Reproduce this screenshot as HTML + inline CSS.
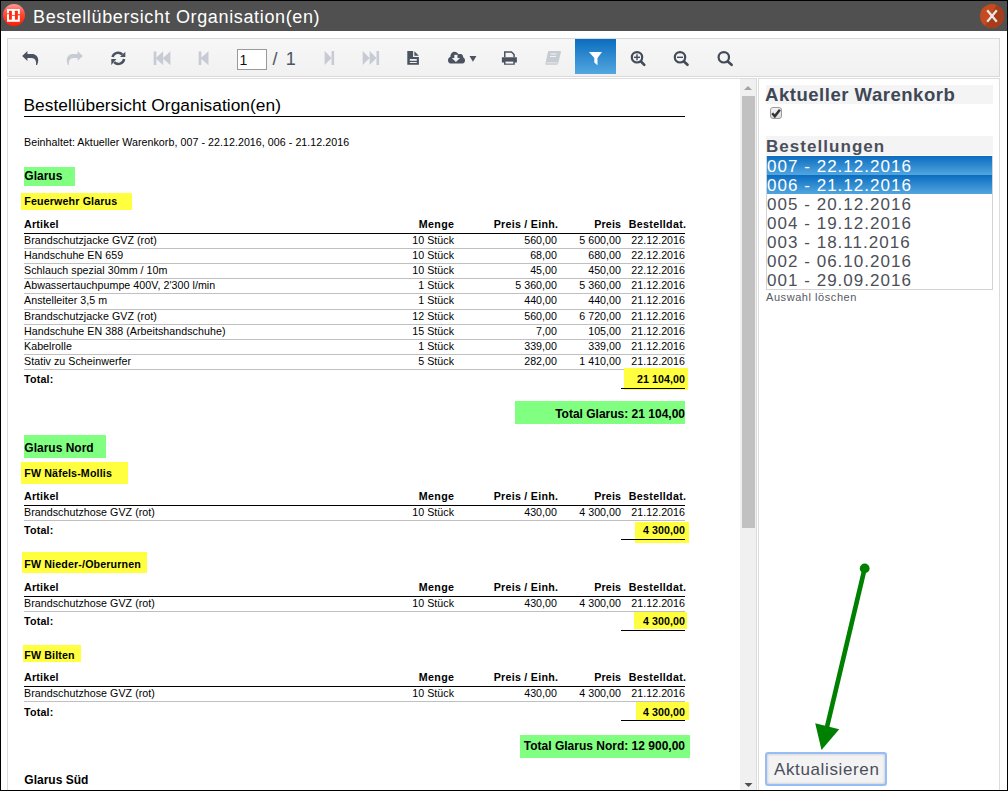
<!DOCTYPE html>
<html><head><meta charset="utf-8">
<style>
html,body{margin:0;padding:0;}
body{width:1008px;height:791px;overflow:hidden;position:relative;background:#fff;font-family:"Liberation Sans",sans-serif;}
.t{position:absolute;white-space:nowrap;line-height:30px;}
.r{position:absolute;}
.a{position:absolute;}
</style></head><body>
<!-- outer frame -->
<div class="a" style="left:0;top:0;width:1008px;height:791px;box-sizing:border-box;border:1px solid #000;border-bottom:none;"></div>
<div class="a" style="left:0;top:790px;width:1008px;height:1px;background:#000;"></div>
<!-- title bar -->
<div class="a" style="left:1px;top:1px;width:1006px;height:30px;background:#505050;"></div>
<svg class="a" style="left:2px;top:3px" width="24" height="24" viewBox="0 0 24 24">
 <defs><linearGradient id="lg" x1="0" y1="0" x2="0" y2="1"><stop offset="0" stop-color="#ff9a92"/><stop offset="0.45" stop-color="#ff4a38"/><stop offset="1" stop-color="#ff1a00"/></linearGradient></defs>
 <circle cx="12" cy="12" r="11" fill="url(#lg)"/>
 <rect x="5" y="6" width="12.8" height="12.8" fill="#fff"/>
 <rect x="7" y="7.7" width="2.9" height="9" rx="0.6" fill="#ff2a10"/>
 <rect x="12.9" y="7.7" width="3" height="9" rx="0.6" fill="#ff2a10"/>
 <rect x="5" y="10.2" width="2.2" height="1" fill="#ff4a30"/>
 <rect x="9.8" y="12" width="3.2" height="0.9" fill="#ff4a30"/>
 <rect x="15.8" y="11" width="2.1" height="1.4" fill="#ff4a30"/>
</svg>
<div class="t" style="left:33px;top:2px;font-size:18px;letter-spacing:0.64px;color:#fff;line-height:30px;">Bestellübersicht Organisation(en)</div>
<svg class="a" style="left:980px;top:4px" width="24" height="24" viewBox="0 0 24 24">
 <defs><clipPath id="cc"><circle cx="12" cy="12" r="12"/></clipPath></defs>
 <g clip-path="url(#cc)"><rect width="24" height="24" fill="#c44a20"/><polygon points="17,0 24,0 24,24 4,24" fill="#a63c1a"/></g>
 <path d="M7.2 6.2 L16.8 17.8 M16.8 6.2 L7.2 17.8" stroke="#e8e8e8" stroke-width="2.2"/>
</svg>

<!-- toolbar -->
<div class="a" style="left:7px;top:38px;width:993px;height:39px;box-sizing:border-box;border:1px solid #d9d9d9;background:linear-gradient(#f7f7f7,#f1f1f1);"></div>
<div class="a" style="left:575px;top:39px;width:41px;height:35px;background:linear-gradient(#0b6dc0,#53a7df);"></div>
<!--ICONS-->
<svg class="a" style="left:0;top:0" width="1008" height="80">
 <g fill="#4b5361">
  <!-- reply -->
  <path d="M22.2 55.9 L27.4 50.9 L27.4 54 L32 54 C35.6 54 38.2 56.6 38.2 60 C38.2 62 37.7 63.5 37.1 64.9 L36 64.9 C36.3 63 36.1 61.5 35.4 60.2 C34.6 58.7 33.5 57.9 31 57.9 L27.4 57.9 L27.4 60.9 Z"/>
 </g>
 <g fill="#c7cbd3">
  <!-- share -->
  <path d="M82.8 55.9 L77.6 50.9 L77.6 54 L73 54 C69.4 54 66.8 56.6 66.8 60 C66.8 62 67.3 63.5 67.9 64.9 L69 64.9 C68.7 63 68.9 61.5 69.6 60.2 C70.4 58.7 71.5 57.9 74 57.9 L77.6 57.9 L77.6 60.9 Z"/>
 </g>
 <!-- refresh -->
 <g fill="none" stroke="#4b5361" stroke-width="2.5">
  <path d="M112.5 57 A5.8 5.8 0 0 1 122.4 54.6"/>
  <path d="M124.1 59 A5.8 5.8 0 0 1 114.2 62.2"/>
 </g>
 <g fill="#4b5361">
  <polygon points="125.3,51.8 125.3,56.9 120,56.9"/>
  <polygon points="111.3,64.9 111.3,59 116.4,59"/>
 </g>
 <g fill="#c7cbd3">
  <!-- fast backward -->
  <rect x="153.7" y="51.5" width="2.6" height="13.5"/>
  <polygon points="155.6,58.2 163.2,51.2 163.2,65.2"/>
  <polygon points="162.8,58.2 170.4,51.2 170.4,65.2"/>
  <!-- step backward -->
  <rect x="198.7" y="51.5" width="2.6" height="13.5"/>
  <polygon points="200.6,58.2 208.5,51.2 208.5,65.2"/>
  <!-- step forward -->
  <polygon points="324.6,51 331.6,57.9 324.6,65"/>
  <rect x="331.5" y="51" width="2.6" height="14"/>
  <!-- fast forward -->
  <polygon points="362.7,51 369.6,57.9 362.7,65"/>
  <polygon points="369.6,51 376.5,57.9 369.6,65"/>
  <rect x="376.5" y="51" width="2.6" height="14"/>
 </g>
 <g fill="#4b5361">
  <!-- file text -->
  <path d="M407.3 51 L413.1 51 L413.1 56.9 L418.9 56.9 L418.9 64.7 L407.3 64.7 Z"/>
  <polygon points="414.4,51.3 418.9,55.8 414.4,55.8"/>
 </g>
 <g fill="#eeeeee">
  <rect x="409.8" y="59" width="7" height="1.8"/>
  <rect x="409.8" y="62" width="7" height="1"/>
 </g>
 <g fill="#4b5361">
  <!-- cloud download -->
  <path d="M450.5 63.4 C449 63.4 448 62.2 448 60.2 C448 58.3 449.2 57 450.4 56.9 C450.4 54 452.2 51.8 454.3 51.8 C456.4 51.8 457.8 53 458.3 54.2 C458.8 54.1 459.5 54 460.5 54 C462.3 54 463.2 55.6 463.3 57.5 C464.3 57.9 465 59 465 60.5 C465 62.2 464 63.4 462.5 63.4 Z"/>
  <polygon points="469.5,55.9 476.4,55.9 472.95,61.8"/>
 </g>
 <g fill="#f3f3f3">
  <rect x="454.3" y="54.8" width="3.2" height="3.8"/>
  <polygon points="451.8,58.1 460,58.1 455.9,62.1"/>
 </g>
 <g fill="#4b5361">
  <!-- print -->
  <path d="M504 51.2 L511.8 51.2 L514.8 54.2 L514.8 57.2 L513.3 57.2 L513.3 54.8 L511.2 52.7 L505.5 52.7 L505.5 57.2 L504 57.2 Z"/>
  <path d="M501.9 57.2 L516.9 57.2 L516.9 62.4 L514.8 62.4 L514.8 64.8 L504 64.8 L504 62.4 L501.9 62.4 Z"/>
 </g>
 <g fill="#f6f6f6"><rect x="505.5" y="61.6" width="7.8" height="2.0"/></g>
 <!-- book (disabled) -->
 <g fill="#c7cbd3">
  <path d="M548.6 51.1 L560.2 51.1 C560.8 51.1 561 51.6 560.9 52.2 L558.2 63.6 C558 64.4 557.5 64.8 556.8 64.8 L546.5 64.8 C545.6 64.8 545.2 64.2 545.4 63.4 L547.9 52 C548 51.5 548.2 51.1 548.6 51.1 Z"/>
 </g>
 <g fill="#f3f3f3"><path d="M550.8 53.6 L556.6 53.6 L556.4 54.6 L550.6 54.6 Z"/><path d="M550.2 56.1 L556 56.1 L555.8 57.1 L550 57.1 Z"/><path d="M546.6 62.6 L557.8 62.6 L557.6 63.3 L546.4 63.3 Z"/></g>
 <!-- filter -->
 <path d="M589 52 L602 52 L597.5 58 L597.5 65.3 L594.3 62.5 L594.3 58 Z" fill="#fff"/>
 <!-- search plus / minus / search -->
 <g fill="none" stroke="#434b58" stroke-width="2.2">
  <circle cx="637" cy="57.3" r="5.2"/>
  <circle cx="680" cy="57.3" r="5.2"/>
  <circle cx="723.8" cy="57.3" r="5.2"/>
 </g>
 <g stroke="#434b58" stroke-width="2.6" stroke-linecap="round">
  <line x1="641" y1="61.5" x2="644.3" y2="64.8"/>
  <line x1="684" y1="61.5" x2="687.5" y2="64.8"/>
  <line x1="727.8" y1="61.5" x2="731.6" y2="64.8"/>
 </g>
 <g stroke="#434b58" stroke-width="1.4">
  <line x1="634" y1="57.3" x2="640" y2="57.3"/><line x1="637" y1="54.3" x2="637" y2="60.3"/>
  <line x1="677" y1="57.3" x2="683" y2="57.3"/>
 </g>
</svg>
<!-- page input -->
<div class="a" style="left:237px;top:49px;width:30px;height:21px;box-sizing:border-box;border:1px solid #9a9a9a;background:#fff;"></div>
<div class="t" style="left:239.5px;top:45px;font-size:14px;color:#111;">1</div>
<div class="t" style="left:272.5px;top:44px;font-size:18px;color:#4b5361;letter-spacing:1.6px;">/ 1</div>

<!-- report panel -->
<div class="a" style="left:7px;top:78px;width:750px;height:712px;box-sizing:border-box;border:1px solid #dcdcdc;border-bottom:none;"></div>
<!-- scrollbar -->
<div class="a" style="left:740px;top:79px;width:16px;height:711px;background:#f0f0f0;"></div>
<div class="a" style="left:742px;top:96px;width:13px;height:432px;background:#c1c1c1;"></div>
<svg class="a" style="left:740px;top:80px" width="16" height="12"><polygon points="4,10 12,10 8,6" fill="#a3a3a3"/></svg>
<svg class="a" style="left:740px;top:778px" width="16" height="12"><polygon points="4.5,5 12.5,5 8.5,9" fill="#505050"/></svg>
<div class="t" style="top:90px;font-size:17.33px;letter-spacing:0.04px;left:23.5px;">Bestellübersicht Organisation(en)</div>
<div class="r" style="left:24px;top:116px;width:661px;height:1px;background:#000;"></div>
<div class="t" style="top:127px;font-size:10.67px;letter-spacing:0.05px;left:24px;">Beinhaltet: Aktueller Warenkorb, 007 - 22.12.2016, 006 - 21.12.2016</div>
<div class="r" style="left:24px;top:167px;width:51px;height:19px;background:#80ff80;"></div>
<div class="t" style="top:161px;font-size:12px;font-weight:bold;left:24.3px;">Glarus</div>
<div class="r" style="left:21px;top:193px;width:111px;height:17px;background:#ffff40;"></div>
<div class="t" style="top:186px;font-size:10.67px;font-weight:bold;letter-spacing:0.15px;left:24.3px;">Feuerwehr Glarus</div>
<div class="t" style="top:209px;font-size:10.67px;font-weight:bold;letter-spacing:0.22px;left:24px;">Artikel</div>
<div class="t" style="top:209px;font-size:10.67px;font-weight:bold;letter-spacing:0.4px;right:553.6px;text-align:right;">Menge</div>
<div class="t" style="top:209px;font-size:10.67px;font-weight:bold;letter-spacing:0.28px;right:449.72px;text-align:right;">Preis / Einh.</div>
<div class="t" style="top:209px;font-size:10.67px;font-weight:bold;letter-spacing:0.2px;right:386.8px;text-align:right;">Preis</div>
<div class="t" style="top:209px;font-size:10.67px;font-weight:bold;letter-spacing:0.33px;right:321.67px;text-align:right;">Bestelldat.</div>
<div class="r" style="left:24px;top:233px;width:661px;height:1px;background:#000;"></div>
<div class="t" style="top:225px;font-size:10.67px;letter-spacing:0.05px;left:24px;">Brandschutzjacke GVZ (rot)</div>
<div class="t" style="top:225px;font-size:10.67px;letter-spacing:0.05px;right:553.95px;text-align:right;">10 Stück</div>
<div class="t" style="top:225px;font-size:10.67px;letter-spacing:0.05px;right:450.95px;text-align:right;">560,00</div>
<div class="t" style="top:225px;font-size:10.67px;letter-spacing:0.05px;right:386.95px;text-align:right;">5 600,00</div>
<div class="t" style="top:225px;font-size:10.67px;letter-spacing:0.05px;right:322.95px;text-align:right;">22.12.2016</div>
<div class="r" style="left:24px;top:248px;width:661px;height:1px;background:#c0c0c0;"></div>
<div class="t" style="top:240px;font-size:10.67px;letter-spacing:0.05px;left:24px;">Handschuhe EN 659</div>
<div class="t" style="top:240px;font-size:10.67px;letter-spacing:0.05px;right:553.95px;text-align:right;">10 Stück</div>
<div class="t" style="top:240px;font-size:10.67px;letter-spacing:0.05px;right:450.95px;text-align:right;">68,00</div>
<div class="t" style="top:240px;font-size:10.67px;letter-spacing:0.05px;right:386.95px;text-align:right;">680,00</div>
<div class="t" style="top:240px;font-size:10.67px;letter-spacing:0.05px;right:322.95px;text-align:right;">22.12.2016</div>
<div class="r" style="left:24px;top:263px;width:661px;height:1px;background:#c0c0c0;"></div>
<div class="t" style="top:255px;font-size:10.67px;letter-spacing:0.05px;left:24px;">Schlauch spezial 30mm / 10m</div>
<div class="t" style="top:255px;font-size:10.67px;letter-spacing:0.05px;right:553.95px;text-align:right;">10 Stück</div>
<div class="t" style="top:255px;font-size:10.67px;letter-spacing:0.05px;right:450.95px;text-align:right;">45,00</div>
<div class="t" style="top:255px;font-size:10.67px;letter-spacing:0.05px;right:386.95px;text-align:right;">450,00</div>
<div class="t" style="top:255px;font-size:10.67px;letter-spacing:0.05px;right:322.95px;text-align:right;">22.12.2016</div>
<div class="r" style="left:24px;top:278px;width:661px;height:1px;background:#c0c0c0;"></div>
<div class="t" style="top:270px;font-size:10.67px;letter-spacing:0.05px;left:24px;">Abwassertauchpumpe 400V, 2'300 l/min</div>
<div class="t" style="top:270px;font-size:10.67px;letter-spacing:0.05px;right:553.95px;text-align:right;">1 Stück</div>
<div class="t" style="top:270px;font-size:10.67px;letter-spacing:0.05px;right:450.95px;text-align:right;">5 360,00</div>
<div class="t" style="top:270px;font-size:10.67px;letter-spacing:0.05px;right:386.95px;text-align:right;">5 360,00</div>
<div class="t" style="top:270px;font-size:10.67px;letter-spacing:0.05px;right:322.95px;text-align:right;">21.12.2016</div>
<div class="r" style="left:24px;top:293px;width:661px;height:1px;background:#c0c0c0;"></div>
<div class="t" style="top:285px;font-size:10.67px;letter-spacing:0.05px;left:24px;">Anstelleiter 3,5 m</div>
<div class="t" style="top:285px;font-size:10.67px;letter-spacing:0.05px;right:553.95px;text-align:right;">1 Stück</div>
<div class="t" style="top:285px;font-size:10.67px;letter-spacing:0.05px;right:450.95px;text-align:right;">440,00</div>
<div class="t" style="top:285px;font-size:10.67px;letter-spacing:0.05px;right:386.95px;text-align:right;">440,00</div>
<div class="t" style="top:285px;font-size:10.67px;letter-spacing:0.05px;right:322.95px;text-align:right;">21.12.2016</div>
<div class="r" style="left:24px;top:309px;width:661px;height:1px;background:#c0c0c0;"></div>
<div class="t" style="top:301px;font-size:10.67px;letter-spacing:0.05px;left:24px;">Brandschutzjacke GVZ (rot)</div>
<div class="t" style="top:301px;font-size:10.67px;letter-spacing:0.05px;right:553.95px;text-align:right;">12 Stück</div>
<div class="t" style="top:301px;font-size:10.67px;letter-spacing:0.05px;right:450.95px;text-align:right;">560,00</div>
<div class="t" style="top:301px;font-size:10.67px;letter-spacing:0.05px;right:386.95px;text-align:right;">6 720,00</div>
<div class="t" style="top:301px;font-size:10.67px;letter-spacing:0.05px;right:322.95px;text-align:right;">21.12.2016</div>
<div class="r" style="left:24px;top:324px;width:661px;height:1px;background:#c0c0c0;"></div>
<div class="t" style="top:316px;font-size:10.67px;letter-spacing:0.05px;left:24px;">Handschuhe EN 388 (Arbeitshandschuhe)</div>
<div class="t" style="top:316px;font-size:10.67px;letter-spacing:0.05px;right:553.95px;text-align:right;">15 Stück</div>
<div class="t" style="top:316px;font-size:10.67px;letter-spacing:0.05px;right:450.95px;text-align:right;">7,00</div>
<div class="t" style="top:316px;font-size:10.67px;letter-spacing:0.05px;right:386.95px;text-align:right;">105,00</div>
<div class="t" style="top:316px;font-size:10.67px;letter-spacing:0.05px;right:322.95px;text-align:right;">21.12.2016</div>
<div class="r" style="left:24px;top:339px;width:661px;height:1px;background:#c0c0c0;"></div>
<div class="t" style="top:331px;font-size:10.67px;letter-spacing:0.05px;left:24px;">Kabelrolle</div>
<div class="t" style="top:331px;font-size:10.67px;letter-spacing:0.05px;right:553.95px;text-align:right;">1 Stück</div>
<div class="t" style="top:331px;font-size:10.67px;letter-spacing:0.05px;right:450.95px;text-align:right;">339,00</div>
<div class="t" style="top:331px;font-size:10.67px;letter-spacing:0.05px;right:386.95px;text-align:right;">339,00</div>
<div class="t" style="top:331px;font-size:10.67px;letter-spacing:0.05px;right:322.95px;text-align:right;">21.12.2016</div>
<div class="r" style="left:24px;top:354px;width:661px;height:1px;background:#c0c0c0;"></div>
<div class="t" style="top:346px;font-size:10.67px;letter-spacing:0.05px;left:24px;">Stativ zu Scheinwerfer</div>
<div class="t" style="top:346px;font-size:10.67px;letter-spacing:0.05px;right:553.95px;text-align:right;">5 Stück</div>
<div class="t" style="top:346px;font-size:10.67px;letter-spacing:0.05px;right:450.95px;text-align:right;">282,00</div>
<div class="t" style="top:346px;font-size:10.67px;letter-spacing:0.05px;right:386.95px;text-align:right;">1 410,00</div>
<div class="t" style="top:346px;font-size:10.67px;letter-spacing:0.05px;right:322.95px;text-align:right;">21.12.2016</div>
<div class="r" style="left:24px;top:369px;width:661px;height:1px;background:#c0c0c0;"></div>
<div class="r" style="left:624px;top:368px;width:64px;height:22px;background:#ffff40;"></div>
<div class="r" style="left:621px;top:388px;width:64px;height:1px;background:#000;"></div>
<div class="t" style="top:364px;font-size:10.67px;font-weight:bold;letter-spacing:0.22px;left:24px;">Total:</div>
<div class="t" style="top:364px;font-size:10.67px;font-weight:bold;letter-spacing:0.08px;right:322.92px;text-align:right;">21 104,00</div>
<div class="r" style="left:515px;top:401px;width:170px;height:23px;background:#80ff80;"></div>
<div class="t" style="top:399px;font-size:12px;font-weight:bold;right:323px;text-align:right;">Total Glarus: 21 104,00</div>
<div class="r" style="left:24px;top:435px;width:82px;height:23px;background:#80ff80;"></div>
<div class="t" style="top:433px;font-size:12px;font-weight:bold;left:24.3px;">Glarus Nord</div>
<div class="r" style="left:21px;top:462px;width:107px;height:22px;background:#ffff40;"></div>
<div class="t" style="top:458px;font-size:10.67px;font-weight:bold;letter-spacing:0.15px;left:24.3px;">FW Näfels-Mollis</div>
<div class="t" style="top:481px;font-size:10.67px;font-weight:bold;letter-spacing:0.22px;left:24px;">Artikel</div>
<div class="t" style="top:481px;font-size:10.67px;font-weight:bold;letter-spacing:0.4px;right:553.6px;text-align:right;">Menge</div>
<div class="t" style="top:481px;font-size:10.67px;font-weight:bold;letter-spacing:0.28px;right:449.72px;text-align:right;">Preis / Einh.</div>
<div class="t" style="top:481px;font-size:10.67px;font-weight:bold;letter-spacing:0.2px;right:386.8px;text-align:right;">Preis</div>
<div class="t" style="top:481px;font-size:10.67px;font-weight:bold;letter-spacing:0.33px;right:321.67px;text-align:right;">Bestelldat.</div>
<div class="r" style="left:24px;top:505px;width:661px;height:1px;background:#000;"></div>
<div class="t" style="top:497px;font-size:10.67px;letter-spacing:0.05px;left:24px;">Brandschutzhose GVZ (rot)</div>
<div class="t" style="top:497px;font-size:10.67px;letter-spacing:0.05px;right:553.95px;text-align:right;">10 Stück</div>
<div class="t" style="top:497px;font-size:10.67px;letter-spacing:0.05px;right:450.95px;text-align:right;">430,00</div>
<div class="t" style="top:497px;font-size:10.67px;letter-spacing:0.05px;right:386.95px;text-align:right;">4 300,00</div>
<div class="t" style="top:497px;font-size:10.67px;letter-spacing:0.05px;right:322.95px;text-align:right;">21.12.2016</div>
<div class="r" style="left:24px;top:520px;width:661px;height:1px;background:#c0c0c0;"></div>
<div class="r" style="left:635px;top:522px;width:54px;height:21px;background:#ffff40;"></div>
<div class="r" style="left:621px;top:539px;width:64px;height:1px;background:#000;"></div>
<div class="t" style="top:515px;font-size:10.67px;font-weight:bold;letter-spacing:0.22px;left:24px;">Total:</div>
<div class="t" style="top:515px;font-size:10.67px;font-weight:bold;letter-spacing:0.08px;right:322.92px;text-align:right;">4 300,00</div>
<div class="r" style="left:22px;top:552px;width:125px;height:21px;background:#ffff40;"></div>
<div class="t" style="top:549px;font-size:10.67px;font-weight:bold;letter-spacing:0.15px;left:24.3px;">FW Nieder-/Oberurnen</div>
<div class="t" style="top:572px;font-size:10.67px;font-weight:bold;letter-spacing:0.22px;left:24px;">Artikel</div>
<div class="t" style="top:572px;font-size:10.67px;font-weight:bold;letter-spacing:0.4px;right:553.6px;text-align:right;">Menge</div>
<div class="t" style="top:572px;font-size:10.67px;font-weight:bold;letter-spacing:0.28px;right:449.72px;text-align:right;">Preis / Einh.</div>
<div class="t" style="top:572px;font-size:10.67px;font-weight:bold;letter-spacing:0.2px;right:386.8px;text-align:right;">Preis</div>
<div class="t" style="top:572px;font-size:10.67px;font-weight:bold;letter-spacing:0.33px;right:321.67px;text-align:right;">Bestelldat.</div>
<div class="r" style="left:24px;top:596px;width:661px;height:1px;background:#000;"></div>
<div class="t" style="top:588px;font-size:10.67px;letter-spacing:0.05px;left:24px;">Brandschutzhose GVZ (rot)</div>
<div class="t" style="top:588px;font-size:10.67px;letter-spacing:0.05px;right:553.95px;text-align:right;">10 Stück</div>
<div class="t" style="top:588px;font-size:10.67px;letter-spacing:0.05px;right:450.95px;text-align:right;">430,00</div>
<div class="t" style="top:588px;font-size:10.67px;letter-spacing:0.05px;right:386.95px;text-align:right;">4 300,00</div>
<div class="t" style="top:588px;font-size:10.67px;letter-spacing:0.05px;right:322.95px;text-align:right;">21.12.2016</div>
<div class="r" style="left:24px;top:611px;width:661px;height:1px;background:#c0c0c0;"></div>
<div class="r" style="left:634px;top:612px;width:53px;height:17px;background:#ffff40;"></div>
<div class="r" style="left:621px;top:630px;width:64px;height:1px;background:#000;"></div>
<div class="t" style="top:606px;font-size:10.67px;font-weight:bold;letter-spacing:0.22px;left:24px;">Total:</div>
<div class="t" style="top:606px;font-size:10.67px;font-weight:bold;letter-spacing:0.08px;right:322.92px;text-align:right;">4 300,00</div>
<div class="r" style="left:23px;top:645px;width:58px;height:17px;background:#ffff40;"></div>
<div class="t" style="top:640px;font-size:10.67px;font-weight:bold;letter-spacing:0.15px;left:24.3px;">FW Bilten</div>
<div class="t" style="top:662px;font-size:10.67px;font-weight:bold;letter-spacing:0.22px;left:24px;">Artikel</div>
<div class="t" style="top:662px;font-size:10.67px;font-weight:bold;letter-spacing:0.4px;right:553.6px;text-align:right;">Menge</div>
<div class="t" style="top:662px;font-size:10.67px;font-weight:bold;letter-spacing:0.28px;right:449.72px;text-align:right;">Preis / Einh.</div>
<div class="t" style="top:662px;font-size:10.67px;font-weight:bold;letter-spacing:0.2px;right:386.8px;text-align:right;">Preis</div>
<div class="t" style="top:662px;font-size:10.67px;font-weight:bold;letter-spacing:0.33px;right:321.67px;text-align:right;">Bestelldat.</div>
<div class="r" style="left:24px;top:686px;width:661px;height:1px;background:#000;"></div>
<div class="t" style="top:678px;font-size:10.67px;letter-spacing:0.05px;left:24px;">Brandschutzhose GVZ (rot)</div>
<div class="t" style="top:678px;font-size:10.67px;letter-spacing:0.05px;right:553.95px;text-align:right;">10 Stück</div>
<div class="t" style="top:678px;font-size:10.67px;letter-spacing:0.05px;right:450.95px;text-align:right;">430,00</div>
<div class="t" style="top:678px;font-size:10.67px;letter-spacing:0.05px;right:386.95px;text-align:right;">4 300,00</div>
<div class="t" style="top:678px;font-size:10.67px;letter-spacing:0.05px;right:322.95px;text-align:right;">21.12.2016</div>
<div class="r" style="left:24px;top:701px;width:661px;height:1px;background:#c0c0c0;"></div>
<div class="r" style="left:636px;top:702px;width:53px;height:18px;background:#ffff40;"></div>
<div class="r" style="left:621px;top:720px;width:64px;height:1px;background:#000;"></div>
<div class="t" style="top:697px;font-size:10.67px;font-weight:bold;letter-spacing:0.22px;left:24px;">Total:</div>
<div class="t" style="top:697px;font-size:10.67px;font-weight:bold;letter-spacing:0.08px;right:322.92px;text-align:right;">4 300,00</div>
<div class="r" style="left:520px;top:735px;width:170px;height:23px;background:#80ff80;"></div>
<div class="t" style="top:731px;font-size:12px;font-weight:bold;right:323px;text-align:right;">Total Glarus Nord: 12 900,00</div>
<div class="t" style="top:765px;font-size:12px;font-weight:bold;left:24.3px;">Glarus Süd</div>

<!-- right panel -->
<div class="a" style="left:758px;top:78px;width:242px;height:712px;box-sizing:border-box;border:1px solid #dcdcdc;border-bottom:none;"></div>
<div class="a" style="left:766px;top:156px;width:227px;height:134px;box-sizing:border-box;border:1px solid #d4d4d4;"></div>
<div class="r" style="left:766px;top:85px;width:227px;height:19px;background:#f4f4f4;"></div>
<div class="t" style="top:80px;font-size:18.5px;font-weight:bold;color:#3e4756;letter-spacing:0.53px;left:765px;">Aktueller Warenkorb</div>
<div class="r" style="left:766px;top:136px;width:227px;height:19px;background:#f4f4f4;"></div>
<div class="t" style="top:132px;font-size:17px;font-weight:bold;color:#4a4f5a;letter-spacing:1.04px;left:766px;">Bestellungen</div>
<div class="r" style="left:767px;top:156px;width:225px;height:19px;background:linear-gradient(#0a6cc0,#52a6de);"></div>
<div class="t" style="top:152px;font-size:17px;color:#fff;letter-spacing:1.03px;left:767px;">007 - 22.12.2016</div>
<div class="r" style="left:767px;top:175px;width:225px;height:19px;background:linear-gradient(#0a6cc0,#52a6de);"></div>
<div class="t" style="top:171px;font-size:17px;color:#fff;letter-spacing:1.03px;left:767px;">006 - 21.12.2016</div>
<div class="t" style="top:190px;font-size:17px;color:#4c4f58;letter-spacing:1.03px;left:767px;">005 - 20.12.2016</div>
<div class="t" style="top:209px;font-size:17px;color:#4c4f58;letter-spacing:1.03px;left:767px;">004 - 19.12.2016</div>
<div class="t" style="top:228px;font-size:17px;color:#4c4f58;letter-spacing:1.03px;left:767px;">003 - 18.11.2016</div>
<div class="t" style="top:247px;font-size:17px;color:#4c4f58;letter-spacing:1.03px;left:767px;">002 - 06.10.2016</div>
<div class="t" style="top:266px;font-size:17px;color:#4c4f58;letter-spacing:1.03px;left:767px;">001 - 29.09.2016</div>
<div class="t" style="top:282px;font-size:11px;color:#555a64;letter-spacing:0.56px;left:766px;">Auswahl löschen</div>
<div class="a" style="left:770px;top:107px;width:12px;height:12px;box-sizing:border-box;border:1px solid #9b9b9b;border-radius:3px;background:linear-gradient(#f4f4f4,#dcdcdc);"></div>
<svg class="a" style="left:770px;top:107px" width="12" height="12"><path d="M2.2 6.2 L4.8 9.2 L9.9 2.7" fill="none" stroke="#333" stroke-width="2.5"/></svg>

<!-- arrow -->
<svg class="a" style="left:760px;top:550px" width="140" height="210">
 <line x1="104.7" y1="18.4" x2="67" y2="177" stroke="#008000" stroke-width="4.6"/>
 <circle cx="104.7" cy="18.4" r="4.9" fill="#008000"/>
 <polygon points="55.2,173.3 79.2,179.3 61.5,200.1" fill="#008000"/>
</svg>
<!-- button -->
<div class="a" style="left:765px;top:752px;width:122px;height:34px;box-sizing:border-box;border:2px solid #96bdf5;border-radius:3px;background:#f3f3f3;box-shadow:inset 0 0 3px #bcbcbc;"></div>
<div class="t" style="left:774px;top:755px;font-size:17px;color:#4a4e5c;letter-spacing:0.63px;">Aktualisieren</div>
</body></html>
